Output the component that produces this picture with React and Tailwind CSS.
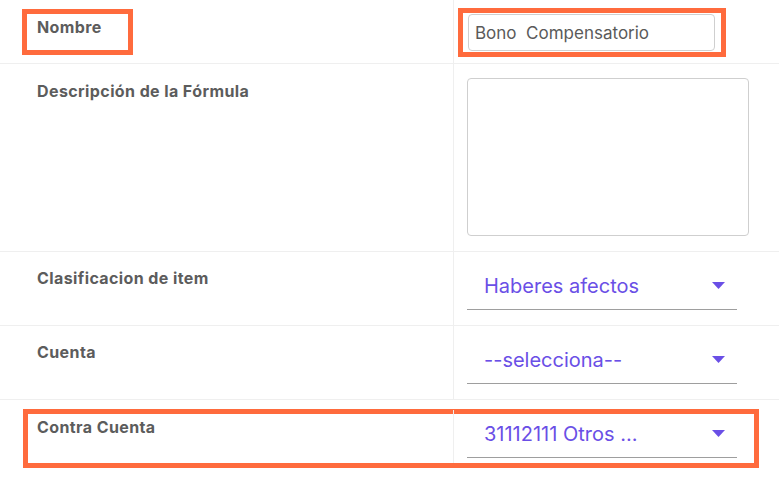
import { useState } from 'react';

const font = { fontFamily: 'Inter, "Noto Sans", sans-serif' };

const labelCls = 'text-[16px] leading-[20px] font-bold tracking-[0.4px] text-[#5c5c5c]';

function Caret() {
  return (
    <svg width="13" height="7" viewBox="0 0 13 7" className="shrink-0">
      <path d="M0 0 L13 0 L6.5 7 Z" fill="#6a4fe6" />
    </svg>
  );
}

function SelectField({ value }) {
  return (
    <div className="flex items-center justify-between w-[270px] h-[48px] border-b border-[#9e9e9e] pl-[17px] pr-[12px]">
      <span className="text-[20px] text-[#6a4fe6]">{value}</span>
      <Caret />
    </div>
  );
}

export default function App() {
  const [nombre, setNombre] = useState('Bono  Compensatorio');

  return (
    <div className="w-[779px] h-[485px] bg-white overflow-hidden" style={font}>
      {/* Nombre */}
      <div className="flex h-[64px] border-b border-[#efefef]">
        <div className="w-[453px] pt-[9px] pl-[22px]">
          <div className="w-[111px] h-[46px] border-[5px] border-[#ff6b3d] pl-[10px] pt-[1px]">
            <span className={labelCls}>Nombre</span>
          </div>
        </div>
        <div className="flex-1 border-l border-[#efefef] pt-[8px] pl-[4px]">
          <div className="w-[268px] h-[49px] border-[5px] border-[#ff6b3d] pt-[1px] pl-[5px]">
            <input
              value={nombre}
              onChange={(e) => setNombre(e.target.value)}
              className="w-[247px] h-[37px] border border-[#cfcfcf] rounded-[4px] px-[6px] text-[17px] text-[#5a5a5a] outline-none"
            />
          </div>
        </div>
      </div>

      {/* Descripción */}
      <div className="flex h-[188px] border-b border-[#efefef]">
        <div className="w-[453px] pt-[15px] pl-[37px]">
          <span className={labelCls}>Descripción de la Fórmula</span>
        </div>
        <div className="flex-1 border-l border-[#efefef] pt-[14px] pl-[13px]">
          <textarea className="w-[282px] h-[158px] border border-[#cfcfcf] rounded-[4px] resize-none outline-none" />
        </div>
      </div>

      {/* Clasificacion */}
      <div className="flex h-[74px] border-b border-[#efefef]">
        <div className="w-[453px] pt-[14px] pl-[37px]">
          <span className={labelCls}>Clasificacion de item</span>
        </div>
        <div className="flex-1 border-l border-[#efefef] pt-[10px] pl-[13px]">
          <SelectField value="Haberes afectos" />
        </div>
      </div>

      {/* Cuenta */}
      <div className="flex h-[74px] border-b border-[#efefef]">
        <div className="w-[453px] pt-[14px] pl-[37px]">
          <span className={labelCls}>Cuenta</span>
        </div>
        <div className="flex-1 border-l border-[#efefef] pt-[10px] pl-[13px]">
          <SelectField value="--selecciona--" />
        </div>
      </div>

      {/* Contra Cuenta */}
      <div className="pt-[9px] pl-[23px]">
        <div className="flex w-[736px] h-[59px] border-[5px] border-[#ff6b3d]">
          <div className="w-[425px] pl-[9px] pt-[1px]">
            <span className={labelCls}>Contra Cuenta</span>
          </div>
          <div className="flex-1 border-l border-[#efefef] pl-[13px] -mt-[4px]">
            <SelectField value="31112111 Otros ..." />
          </div>
        </div>
      </div>
    </div>
  );
}
